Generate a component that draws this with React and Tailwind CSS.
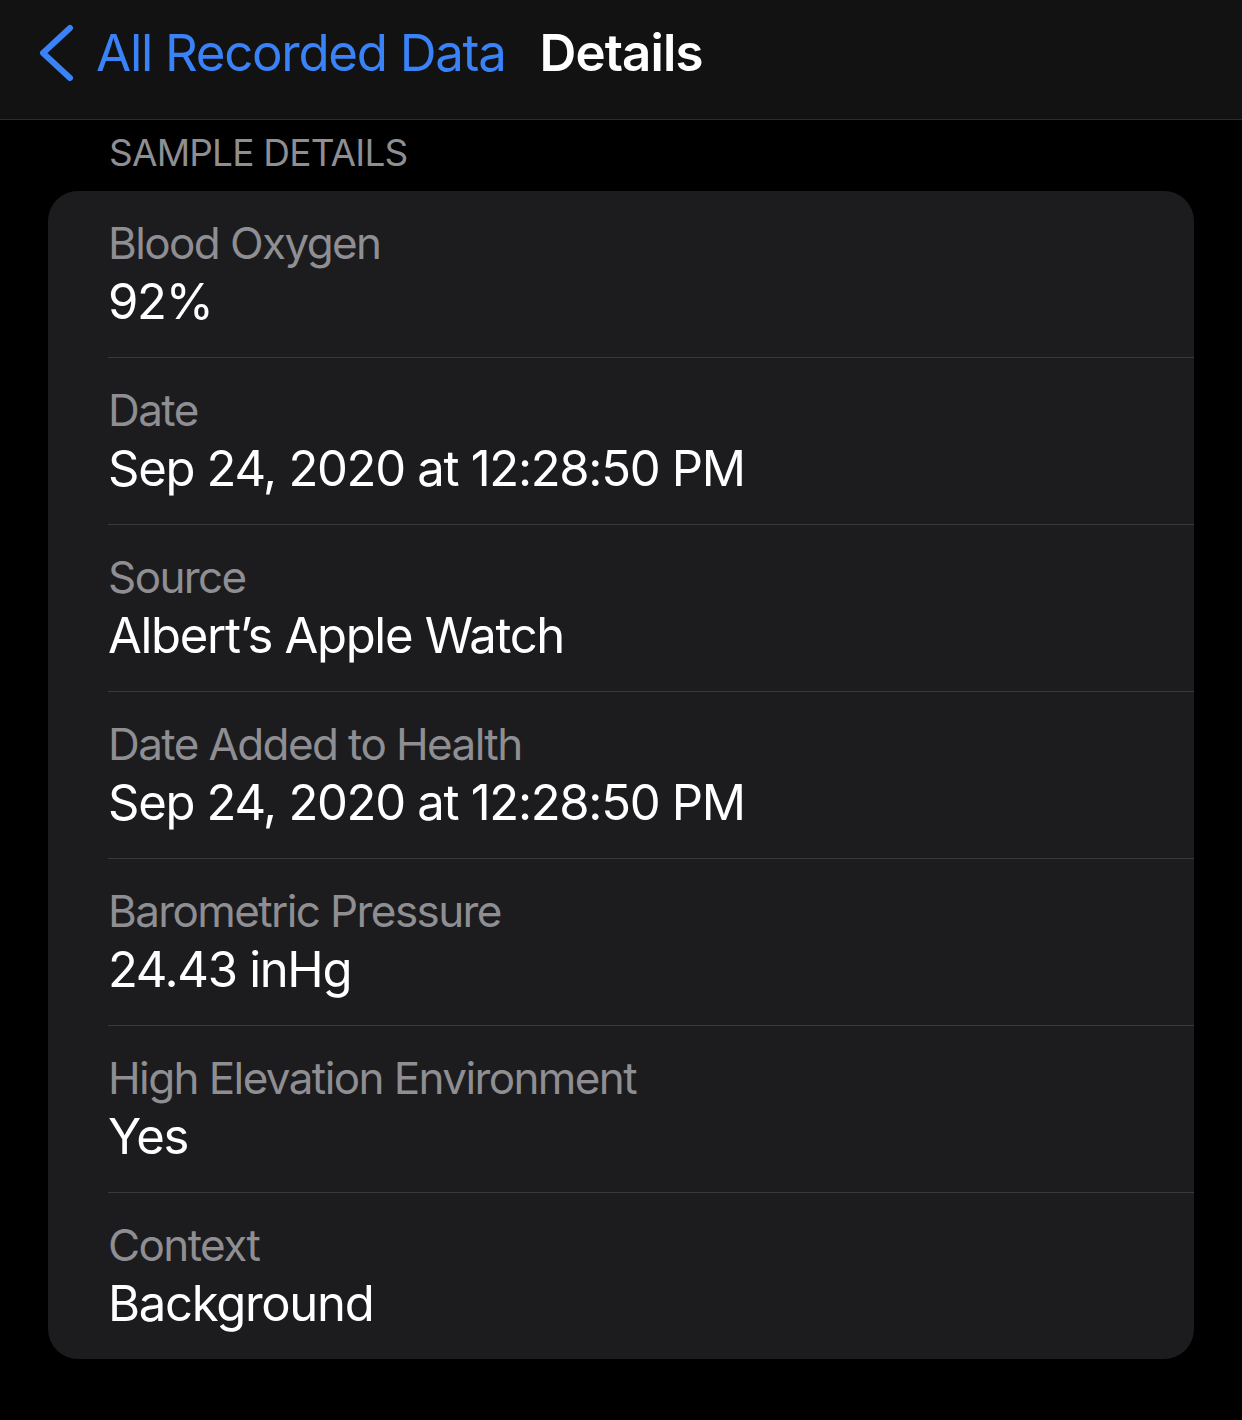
import React from "react";

const rows = [
  ["Blood Oxygen", "92%"],
  ["Date", "Sep 24, 2020 at 12:28:50 PM"],
  ["Source", "Albert\u2019s Apple Watch"],
  ["Date Added to Health", "Sep 24, 2020 at 12:28:50 PM"],
  ["Barometric Pressure", "24.43 inHg"],
  ["High Elevation Environment", "Yes"],
  ["Context", "Background"],
];

export default function App() {
  return (
    <div
      className="w-[1242px] h-[1420px] bg-black overflow-hidden"
      style={{ fontFamily: "Inter, 'Noto Sans', sans-serif" }}
    >
      <header className="h-[120px] bg-[#121212] border-b border-[#2c2c2e] flex items-start">
        <div className="flex items-center pl-[38px] pt-[23px]">
          <svg width="38" height="58" viewBox="0 0 38 58" className="mr-[20px] -mt-[1px]">
            <path d="M32 4 L5 29 L32 54" fill="none" stroke="#3a82f7" strokeWidth="6" strokeLinecap="round" strokeLinejoin="round" />
          </svg>
          <span className="text-[51px] leading-[60px] text-[#3a82f7] tracking-[-1.3px]">All Recorded Data</span>
          <span className="ml-[34px] text-[51px] leading-[60px] text-white font-semibold tracking-[-0.9px]">Details</span>
        </div>
      </header>
      <div className="h-[71px] pl-[109px] pt-[10px]">
        <span className="text-[37px] leading-[46px] text-[#8e8e93] tracking-[-0.8px]">SAMPLE DETAILS</span>
      </div>
      <div className="mx-[48px] w-[1146px] bg-[#1c1c1e] rounded-[30px] overflow-hidden">
        {rows.map(([label, value], i) => (
          <div key={i} className="pl-[60px]">
            <div className={i < rows.length - 1 ? "border-b border-[#38383a]" : ""}>
              <div className="pt-[25px] pb-[25px]">
                <div className="text-[44px] leading-[54px] text-[#8e8e93] tracking-[-1.6px]">{label}</div>
                <div className="pt-[2px] text-[49px] leading-[60px] text-white tracking-[-1.3px]">{value}</div>
              </div>
            </div>
          </div>
        ))}
      </div>
    </div>
  );
}
